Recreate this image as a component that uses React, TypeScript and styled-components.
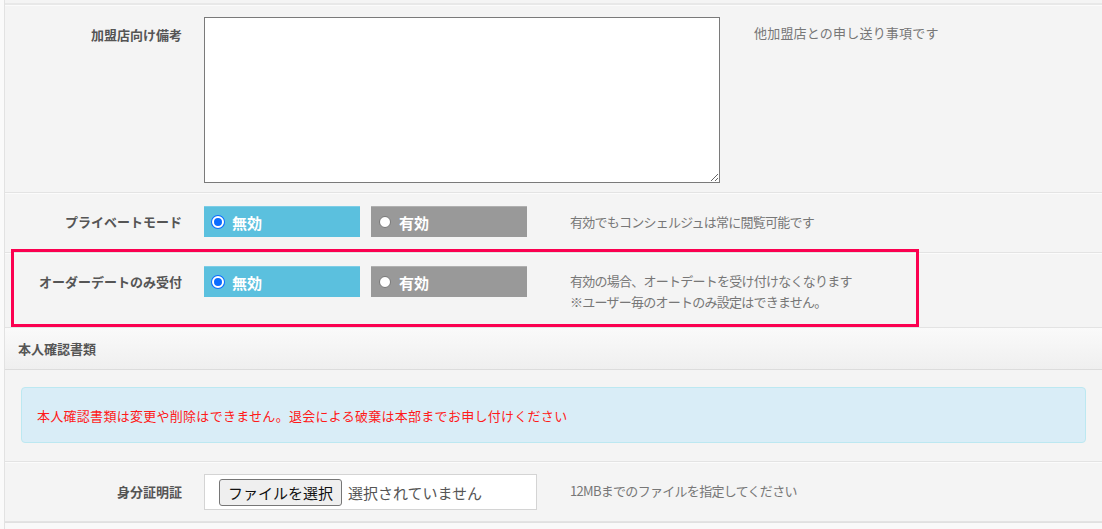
import React from "react";
import styled, { createGlobalStyle } from "styled-components";

const Global = createGlobalStyle`
  html, body { margin: 0; padding: 0; background: #fafafa; }
  body { font-family: "Noto Sans CJK JP", "Noto Sans", sans-serif; overflow: hidden; }
  * { box-sizing: border-box; }
`;

const Panel = styled.div`
  margin-left: 4px;
  width: 1098px;
  border-left: 1px solid #e2e2e2;
  background: #f4f4f4;
`;

const TopStrip = styled.div`
  height: 5px;
  background: #f4f4f4;
  border-bottom: 2px solid #e8e8e8;
`;

const Row = styled.div<{ $pt: number; $pb: number }>`
  position: relative;
  display: flex;
  align-items: flex-start;
  padding: ${(p) => p.$pt}px 0 ${(p) => p.$pb}px 0;
  border-bottom: 1px solid #e3e3e3;
  border-top: 1px solid #fbfbfb;
`;

const Label = styled.div<{ $mt: number }>`
  width: 177px;
  flex: none;
  margin-top: ${(p) => p.$mt}px;
  text-align: right;
  font-size: 13px;
  font-weight: 700;
  color: #555;
  line-height: 18px;
`;

const Field = styled.div<{ $w: number }>`
  width: ${(p) => p.$w}px;
  flex: none;
  margin-left: 22px;
`;

const Help = styled.div<{ $mt: number; $ls: number }>`
  margin-top: ${(p) => p.$mt}px;
  font-size: 13px;
  color: #777;
  line-height: 21px;
  letter-spacing: ${(p) => p.$ls}px;
`;

const TextArea = styled.textarea`
  display: block;
  width: 516px;
  height: 166px;
  border: 1px solid #7a7a7a;
  background: #fff;
  margin: 0;
`;

const Radios = styled.div`
  display: flex;
  gap: 11px;
`;

const RadioBtn = styled.label<{ $on: boolean }>`
  display: flex;
  align-items: center;
  width: 156px;
  height: 31px;
  padding-left: 8px;
  background: ${(p) => (p.$on ? "#5bc0de" : "#999999")};
  color: #fff;
  font-weight: 700;
  font-size: 15px;
  border-top: 1px solid ${(p) => (p.$on ? "#7dcde6" : "#b0b0b0")};
`;

const Dot = styled.span<{ $on: boolean }>`
  width: 12px;
  height: 12px;
  border-radius: 50%;
  margin-right: 8px;
  flex: none;
  background: ${(p) => (p.$on ? "#0a6cff" : "#fff")};
  border: ${(p) => (p.$on ? "2px solid #fff" : "1px solid #777")};
  box-shadow: ${(p) => (p.$on ? "0 0 0 1px #0a6cff" : "none")};
`;

const Highlight = styled.div`
  position: absolute;
  left: 6px;
  top: -5px;
  width: 908px;
  height: 78px;
  border: 3px solid #fb0050;
  pointer-events: none;
`;

const SectionHead = styled.div`
  height: 42px;
  display: flex;
  align-items: center;
  padding-left: 13px;
  font-size: 13px;
  font-weight: 700;
  color: #555;
  background: linear-gradient(#fafafa, #efefef);
  border-bottom: 1px solid #dcdcdc;
`;

const AlertWrap = styled.div`
  padding: 17px 16px 18px 16px;
  border-bottom: 1px solid #e3e3e3;
`;

const Alert = styled.div`
  height: 56px;
  display: flex;
  align-items: center;
  padding-left: 15px;
  background: #d9edf7;
  border: 1px solid #bce8f1;
  border-radius: 4px;
  color: #ff1a1a;
  font-size: 13px;
  letter-spacing: 0.28px;
`;

const FileBox = styled.div`
  width: 333px;
  height: 36px;
  background: #fff;
  border: 1px solid #d4d4d4;
  display: flex;
  align-items: center;
  padding-left: 14px;
  font-size: 15px;
  color: #555;
`;

const FileButton = styled.span`
  height: 27px;
  padding: 0 8px;
  display: flex;
  align-items: center;
  border: 1px solid #767676;
  border-radius: 3px;
  background: #efefef;
  color: #111;
  margin-right: 6px;
  font-size: 15px;
`;

const Bottom = styled.div`
  height: 8px;
  background: #f9f9f9;
  border-top: 1px solid #e0e0e0;
`;

function Radio({ on, children }: { on: boolean; children: React.ReactNode }) {
  return (
    <RadioBtn $on={on}>
      <Dot $on={on} />
      {children}
    </RadioBtn>
  );
}

export default function App() {
  return (
    <>
      <Global />
      <Panel>
        <TopStrip />
        <Row $pt={11} $pb={9}>
          <Label $mt={9}>加盟店向け備考</Label>
          <Field $w={550}>
            <TextArea />
          </Field>
          <Help $mt={5} $ls={0.2}>他加盟店との申し送り事項です</Help>
        </Row>
        <Row $pt={12} $pb={15}>
          <Label $mt={7}>プライベートモード</Label>
          <Field $w={366}>
            <Radios>
              <Radio on>無効</Radio>
              <Radio on={false}>有効</Radio>
            </Radios>
          </Field>
          <Help $mt={5} $ls={-0.75}>有効でもコンシェルジュは常に閲覧可能です</Help>
        </Row>
        <Row $pt={12} $pb={15}>
          <Highlight />
          <Label $mt={7}>オーダーデートのみ受付</Label>
          <Field $w={366}>
            <Radios>
              <Radio on>無効</Radio>
              <Radio on={false}>有効</Radio>
            </Radios>
          </Field>
          <Help $mt={4} $ls={-0.75}>
            有効の場合、オートデートを受け付けなくなります
            <br />
            ※ユーザー毎のオートのみ設定はできません。
          </Help>
        </Row>
        <SectionHead>本人確認書類</SectionHead>
        <AlertWrap>
          <Alert>本人確認書類は変更や削除はできません。退会による破棄は本部までお申し付けください</Alert>
        </AlertWrap>
        <Row $pt={11} $pb={11}>
          <Label $mt={9}>身分証明証</Label>
          <Field $w={366}>
            <FileBox>
              <FileButton>ファイルを選択</FileButton>
              選択されていません
            </FileBox>
          </Field>
          <Help $mt={6} $ls={-0.7}>12MBまでのファイルを指定してください</Help>
        </Row>
        <Bottom />
      </Panel>
    </>
  );
}
